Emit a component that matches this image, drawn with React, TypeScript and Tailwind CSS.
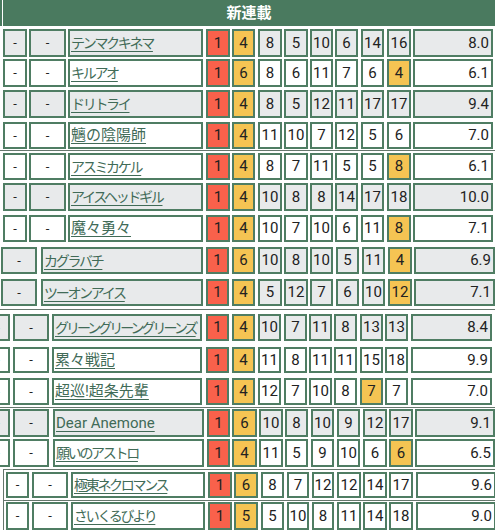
const layouts: Record<string, string[]> = {
  A: [
    'ml-[3px] w-[24px]',
    'ml-[2px] w-[37px]',
    'ml-[2px] w-[135px]',
    'ml-[3px] w-[24px]',
    'ml-[2px] w-[23px]',
    'ml-[3px] w-[24px]',
    'ml-[2px] w-[24px]',
    'ml-[2px] w-[23px]',
    'ml-[2px] w-[23px]',
    'ml-[3px] w-[23px]',
    'ml-[3px] w-[24px]',
    'ml-[2px] w-[80px]',
  ],
  B: [
    'ml-[1px] w-[36px]',
    'ml-[4px] w-[162px]',
    'ml-[3px] w-[23px]',
    'ml-[3px] w-[23px]',
    'ml-[3px] w-[24px]',
    'ml-[2px] w-[24px]',
    'ml-[2px] w-[23px]',
    'ml-[3px] w-[23px]',
    'ml-[3px] w-[23px]',
    'ml-[3px] w-[24px]',
    'ml-[2px] w-[81px]',
  ],
  C: [
    '-ml-[14px] w-[24px]',
    'ml-[3px] w-[36px]',
    'ml-[3px] w-[150px]',
    'ml-[4px] w-[23px]',
    'ml-[3px] w-[23px]',
    'ml-[3px] w-[23px]',
    'ml-[3px] w-[23px]',
    'ml-[2px] w-[23px]',
    'ml-[2px] w-[23px]',
    'ml-[3px] w-[23px]',
    'ml-[2px] w-[23px]',
    'ml-[3px] w-[81px]',
  ],
  D: [
    '-ml-[14px] w-[24px]',
    'ml-[3px] w-[36px]',
    'ml-[4px] w-[151px]',
    'ml-[3px] w-[23px]',
    'ml-[2px] w-[25px]',
    'ml-[2px] w-[24px]',
    'ml-[2px] w-[23px]',
    'ml-[3px] w-[23px]',
    'ml-[3px] w-[23px]',
    'ml-[3px] w-[24px]',
    'ml-[2px] w-[24px]',
    'ml-[2px] w-[80px]',
  ],
  E: [
    'ml-[2px] w-[23px]',
    'ml-[3px] w-[36px]',
    'ml-[3px] w-[134px]',
    'ml-[3px] w-[24px]',
    'ml-[2px] w-[24px]',
    'ml-[3px] w-[23px]',
    'ml-[3px] w-[22px]',
    'ml-[3px] w-[22px]',
    'ml-[3px] w-[24px]',
    'ml-[2px] w-[24px]',
    'ml-[2px] w-[24px]',
    'ml-[3px] w-[80px]',
  ],
}

type RowData = {
  name: string
  layout: string
  grey: boolean
  ranks: number[]
  yellow: number[]
  score: string
  box: string
  nameText?: string
}

// kana titles run narrower than kanji ones in the source font
const KANA = 'text-[14px] tracking-[-2.3px]'

const rows: RowData[] = [
  { name: 'テンマクキネマ', layout: 'A', grey: true, ranks: [1, 4, 8, 5, 10, 6, 14, 16], yellow: [], score: '8.0', box: 'mt-[3px] h-[28px]', nameText: KANA },
  { name: 'キルアオ', layout: 'A', grey: false, ranks: [1, 6, 8, 6, 11, 7, 6, 4], yellow: [7], score: '6.1', box: 'mt-[2px] h-[28px]', nameText: KANA },
  { name: 'ドリトライ', layout: 'A', grey: true, ranks: [1, 4, 8, 5, 12, 11, 17, 17], yellow: [], score: '9.4', box: 'mt-[3px] h-[28px]', nameText: KANA },
  { name: '魑の陰陽師', layout: 'A', grey: false, ranks: [1, 4, 11, 10, 7, 12, 5, 6], yellow: [], score: '7.0', box: 'mt-[4px] h-[27px]' },
  { name: 'アスミカケル', layout: 'A', grey: false, ranks: [1, 4, 8, 7, 11, 5, 5, 8], yellow: [7], score: '6.1', box: 'mt-[2px] h-[27px]', nameText: KANA },
  { name: 'アイスヘッドギル', layout: 'A', grey: true, ranks: [1, 4, 10, 8, 8, 14, 17, 18], yellow: [], score: '10.0', box: 'mt-[3px] h-[28px]', nameText: KANA },
  { name: '魔々勇々', layout: 'A', grey: false, ranks: [1, 4, 10, 7, 10, 6, 11, 8], yellow: [7], score: '7.1', box: 'mt-[4px] h-[27px]' },
  { name: 'カグラバチ', layout: 'B', grey: true, ranks: [1, 6, 10, 8, 10, 5, 11, 4], yellow: [7], score: '6.9', box: 'mt-[5px] h-[27px]', nameText: KANA },
  { name: 'ツーオンアイス', layout: 'B', grey: true, ranks: [1, 4, 5, 12, 7, 6, 10, 12], yellow: [7], score: '7.1', box: 'mt-[5px] h-[27px]', nameText: KANA },
  { name: 'グリーングリーングリーンズ', layout: 'C', grey: true, ranks: [1, 4, 10, 7, 11, 8, 13, 13], yellow: [], score: '8.4', box: 'mt-[4px] h-[27px]', nameText: 'text-[14px] tracking-[-3px]' },
  { name: '累々戦記', layout: 'C', grey: false, ranks: [1, 4, 11, 8, 11, 11, 15, 18], yellow: [], score: '9.9', box: 'mt-[6px] h-[26px]' },
  { name: '超巡!超条先輩', layout: 'C', grey: false, ranks: [1, 4, 12, 7, 10, 8, 7, 7], yellow: [6], score: '7.0', box: 'mt-[5px] h-[27px]' },
  { name: 'Dear Anemone', layout: 'D', grey: true, ranks: [1, 6, 10, 8, 10, 9, 12, 17], yellow: [], score: '9.1', box: 'mt-[1px] h-[28px]' },
  { name: '願いのアストロ', layout: 'D', grey: false, ranks: [1, 4, 11, 5, 9, 10, 6, 6], yellow: [7], score: '6.5', box: 'mt-[2px] h-[28px]', nameText: KANA },
  { name: '極東ネクロマンス', layout: 'E', grey: false, ranks: [1, 6, 8, 7, 12, 12, 14, 17], yellow: [], score: '9.6', box: 'mt-[2px] h-[26px]', nameText: KANA },
  { name: 'さいくるびより', layout: 'E', grey: false, ranks: [1, 5, 5, 10, 8, 11, 14, 18], yellow: [], score: '9.0', box: 'mt-[1px] h-[28px]', nameText: KANA },
]

const cell = 'flex h-full shrink-0 items-center border-2 border-[#4f7d63]'

function Row({ row }: { row: RowData }) {
  const cls = layouts[row.layout]
  const bg = row.grey ? 'bg-[#e8eaeb]' : 'bg-white'
  const dashes = row.layout === 'B' ? 1 : 2
  let i = 0

  return (
    <div className={`flex ${row.box}`}>
      {Array.from({ length: dashes }).map((_, d) => (
        <div key={d} className={`${cell} ${cls[i++]} ${bg} justify-center text-[13px] text-[#222]`}>
          -
        </div>
      ))}
      <div className={`${cell} ${cls[i++]} ${bg} overflow-hidden pl-px`}>
        <span
          className={`whitespace-nowrap leading-none text-[#416b57] underline decoration-1 underline-offset-[3px] ${
            row.nameText ?? 'text-[15px]'
          }`}
        >
          {row.name}
        </span>
      </div>
      {row.ranks.map((r, k) => {
        let tone = bg
        if (k === 0) tone = 'bg-[#f9614b]'
        else if (k === 1 || row.yellow.includes(k)) tone = 'bg-[#f5c453]'
        return (
          <div key={k} className={`${cell} ${cls[i++]} ${tone} justify-center text-[15px] text-[#222]`}>
            {r}
          </div>
        )
      })}
      <div className={`${cell} ${cls[i++]} ${bg} justify-end pr-[2px] text-[15px] text-[#222]`}>
        {row.score}
      </div>
    </div>
  )
}

export default function App() {
  const line = 'h-px w-full shrink-0 bg-[#66776d]'
  return (
    <div className="flex h-[530px] w-[495px] flex-col overflow-hidden bg-white font-['Roboto','Noto_Sans_CJK_JP',sans-serif]">
      <div className="flex h-[26px] shrink-0 border-l-2 border-[#4a7a5f] pl-px">
        <div className="flex flex-1 items-center justify-center bg-[#4a7a5f] text-[15px] font-bold text-white">
          新連載
        </div>
      </div>

      {rows.slice(0, 4).map((r) => <Row key={r.name} row={r} />)}
      <div className={`${line} mt-[1px]`} />
      {rows.slice(4, 9).map((r) => <Row key={r.name} row={r} />)}
      <div className={`${line} mt-[3px]`} />
      {rows.slice(9, 12).map((r) => <Row key={r.name} row={r} />)}
      <div className={`${line} mt-[2px]`} />
      {rows.slice(12, 14).map((r) => <Row key={r.name} row={r} />)}

      <div className="ml-[3px] mt-[2px] flex flex-col border-l border-[#66776d]">
        <div className="h-px w-full bg-[#66776d]" />
        <Row row={rows[14]} />
        <div className="mt-[2px] h-px w-full bg-[#66776d]" />
        <Row row={rows[15]} />
      </div>
    </div>
  )
}
